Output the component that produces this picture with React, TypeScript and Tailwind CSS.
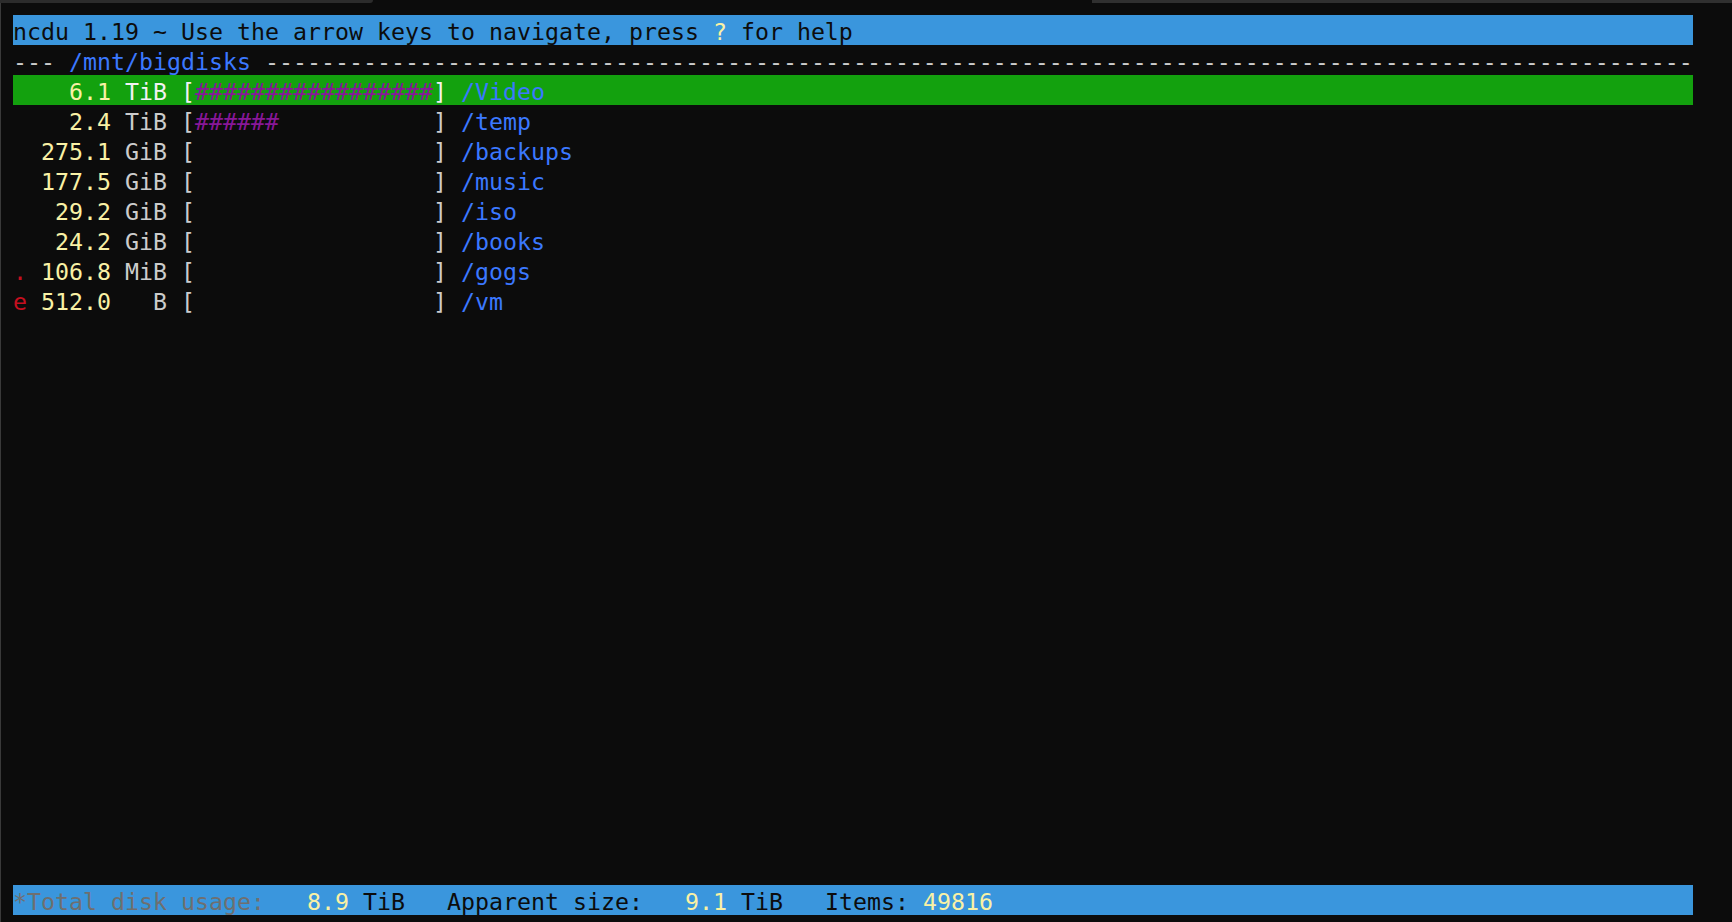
import React from "react";

type Seg = [string, string];

const COLS = 120;

const entries = [
  { flag: " ", size: "  6.1", unit: "TiB", bar: 17, name: "/Video", selected: true },
  { flag: " ", size: "  2.4", unit: "TiB", bar: 6, name: "/temp" },
  { flag: " ", size: "275.1", unit: "GiB", bar: 0, name: "/backups" },
  { flag: " ", size: "177.5", unit: "GiB", bar: 0, name: "/music" },
  { flag: " ", size: " 29.2", unit: "GiB", bar: 0, name: "/iso" },
  { flag: " ", size: " 24.2", unit: "GiB", bar: 0, name: "/books" },
  { flag: ".", size: "106.8", unit: "MiB", bar: 0, name: "/gogs" },
  { flag: "e", size: "512.0", unit: "  B", bar: 0, name: "/vm" },
];

function Line({ segs, bg = "" }: { segs: Seg[]; bg?: string }) {
  return (
    <div className={`h-[30px] w-[1680px] whitespace-pre leading-[33px] ${bg}`}>
      {segs.map(([t, c], i) => (
        <span key={i} className={c}>
          {t}
        </span>
      ))}
    </div>
  );
}

export default function App() {
  const rows: React.ReactNode[] = [];

  rows.push(
    <Line
      key="head"
      bg="bg-[#3a96dd]"
      segs={[
        ["ncdu 1.19 ~ Use the arrow keys to navigate, press ", "text-[#0c0c0c]"],
        ["?", "text-[#f9f1a5]"],
        [" for help", "text-[#0c0c0c]"],
      ]}
    />
  );

  rows.push(
    <Line
      key="path"
      segs={[
        ["--- ", "text-[#cccccc]"],
        ["/mnt/bigdisks", "text-[#3b78ff]"],
        [" " + "-".repeat(COLS - 18), "text-[#cccccc]"],
      ]}
    />
  );

  entries.forEach((e) => {
    const light = e.selected ? "text-[#f2f2f2]" : "text-[#cccccc]";
    rows.push(
      <Line
        key={e.name}
        bg={e.selected ? "bg-[#13a10e]" : ""}
        segs={[
          [e.flag + " ", "text-[#c50f1f]"],
          [e.size, "text-[#f9f1a5]"],
          [" " + e.unit + " [", light],
          ["#".repeat(e.bar), "text-[#881798]"],
          [" ".repeat(17 - e.bar), light],
          ["] ", light],
          [e.name, "text-[#3b78ff]"],
        ]}
      />
    );
  });

  // empty screen lines
  while (rows.length < 29) {
    rows.push(<Line key={"blank" + rows.length} segs={[[" ", ""]]} />);
  }

  rows.push(
    <Line
      key="foot"
      bg="bg-[#3a96dd]"
      segs={[
        ["*Total disk usage:", "text-[#6f6f6f]"],
        ["   ", ""],
        ["8.9", "text-[#f9f1a5]"],
        [" TiB   Apparent size:   ", "text-[#0c0c0c]"],
        ["9.1", "text-[#f9f1a5]"],
        [" TiB   Items: ", "text-[#0c0c0c]"],
        ["49816", "text-[#f9f1a5]"],
      ]}
    />
  );

  return (
    <div className="relative h-[922px] w-[1732px] overflow-hidden bg-[#0c0c0c] font-['DejaVu_Sans_Mono',monospace] text-[23.25px]">
      {/* window chrome edge */}
      <div className="flex h-[3px] w-full">
        <div className="w-[373px] rounded-br-[3px] bg-[#2c2c2c]" />
        <div className="flex-1" />
        <div className="w-[640px] bg-[#303030]" />
      </div>
      <div className="flex h-[919px]">
        <div className="w-px bg-[#3a3a3a]" />
        <div className="flex flex-col pl-[12px] pt-[12px]">{rows}</div>
      </div>
    </div>
  );
}
